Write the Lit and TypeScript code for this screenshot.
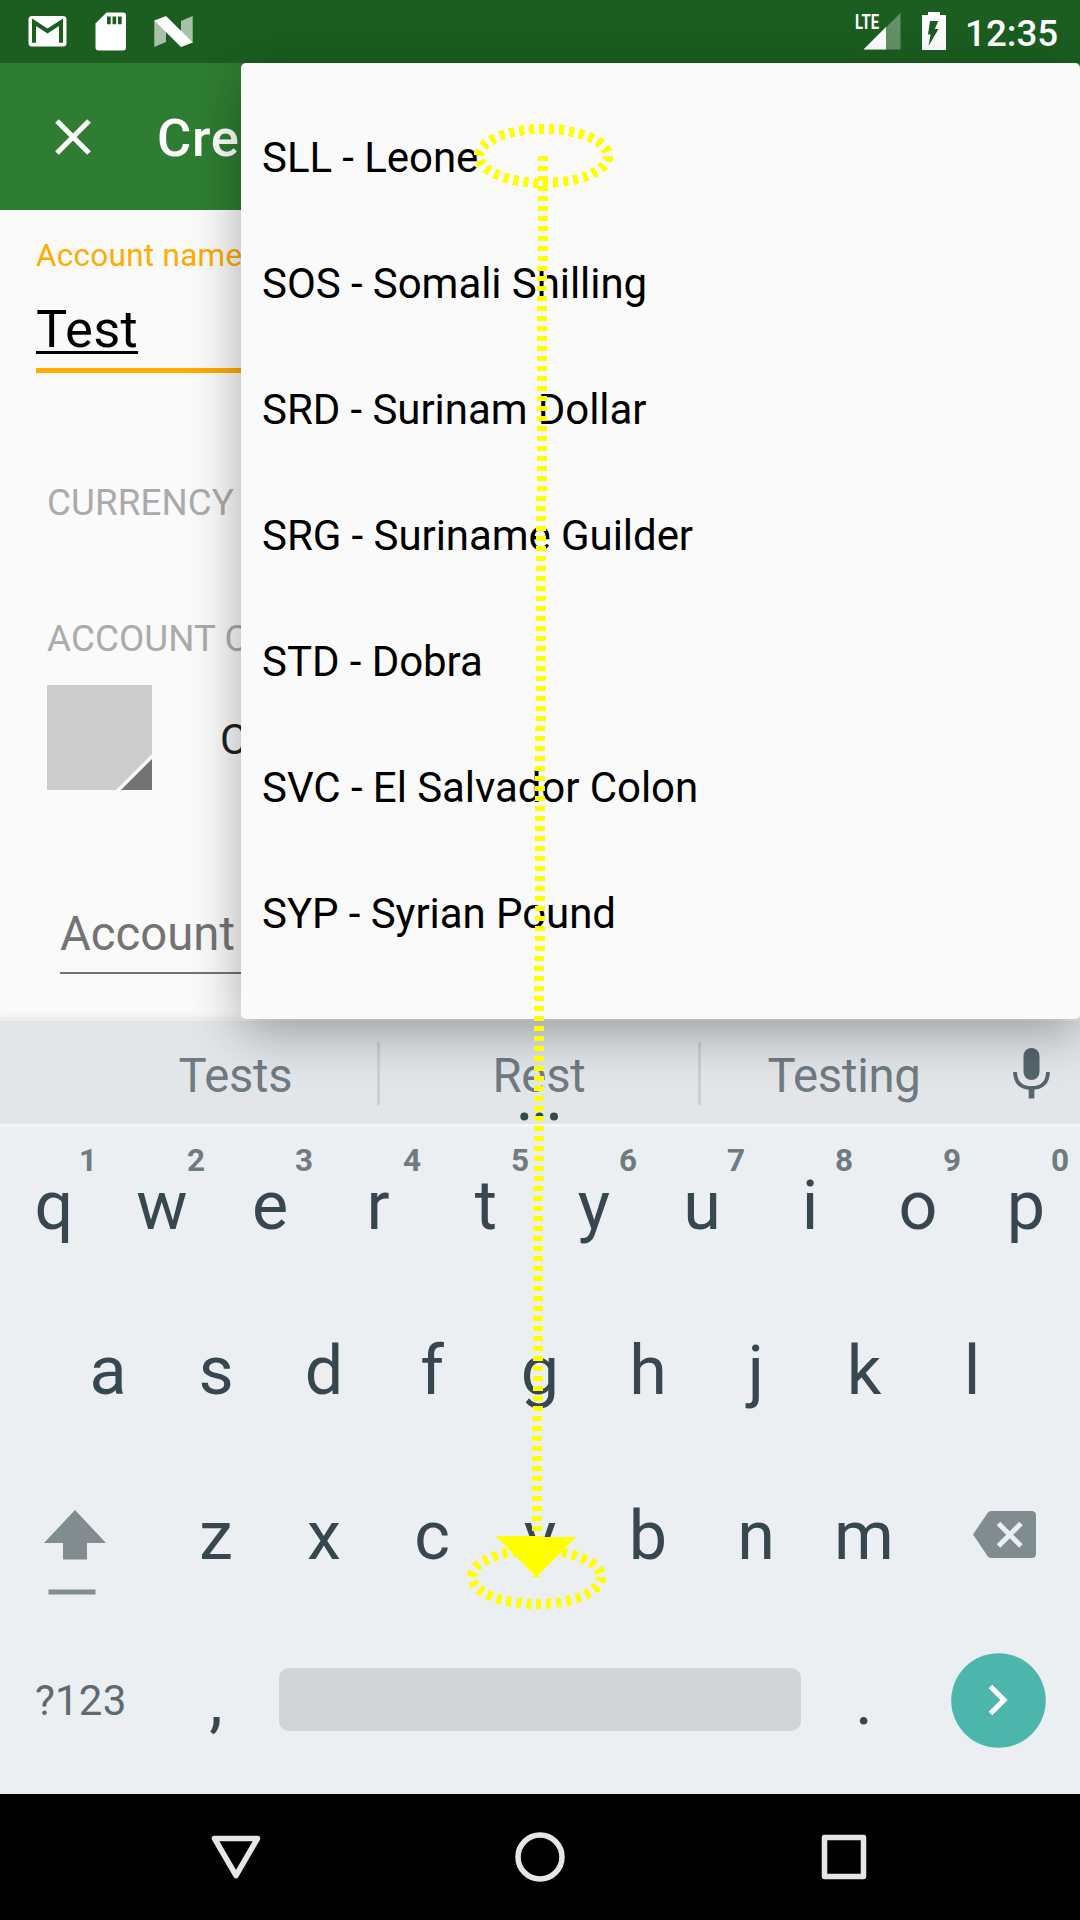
import { LitElement, html, css, svg } from "lit";
import { customElement, property } from "lit/decorators.js";

@customElement("status-bar")
class StatusBar extends LitElement {
  static styles = css`
    :host {
      display: flex;
      justify-content: space-between;
      height: 63px;
      background: #1b5e20;
      color: #fff;
    }
    .icons { display: block; width: 220px; height: 63px; }
    .system { display: flex; }
    .indicators { display: block; width: 110px; height: 63px; }
    .lte { font: 700 20.5px "Roboto", sans-serif; }
    .clock {
      width: 118px;
      font: 500 36.75px/67px "Roboto", sans-serif;
      padding-left: 3px;
      box-sizing: border-box;
    }
  `;
  render() {
    return html`
      <svg class="icons" viewBox="0 0 220 63">
        <rect x="28.5" y="16" width="38" height="30.5" rx="3.5" fill="#fff" />
        <path d="M34 42.7V22.2L47.5 31L61 22.2V42.7" fill="none" stroke="#1b5e20" stroke-width="4" />
        <path d="M106.5 12.5H123Q126 12.5 126 15.5V47.5Q126 50.5 123 50.5H98.500Q95.500 50.500 95.500 47.500V23.500Z" fill="#fff" />
        <path d="M107 16.500h3.700v7.700h-3.700zM112.500 16.500h3.700v7.700h-3.700zM118 16.500h3.700v7.700h-3.700z" fill="#1b5e20" />
        <path d="M154.300 20.500L166 26V42L154.300 47ZM181 21L192.700 16V43L181 38Z" fill="#fff" opacity=".62" />
        <path d="M154.300 20.500L166 16L192.700 42.500L181 47Z" fill="#fff" />
      </svg>
      <div class="system">
        <svg class="indicators" viewBox="852 0 110 63">
          <text class="lte" x="855" y="29" textLength="24" lengthAdjust="spacingAndGlyphs" fill="#fff">LTE</text>
          <path d="M863.500 49.500L900.500 13V49.500Z" fill="#fff" opacity=".32" />
          <path d="M863.500 49.500L886 27V49.500Z" fill="#fff" />
          <path d="M922 15H928V12H940V15H946V50H922Z" fill="#fff" />
          <path d="M930 21H938.300L934.800 29H938.500L928.500 46L930.600 34.500H928Z" fill="#1b5e20" />
        </svg>
        <div class="clock">12:35</div>
      </div>
    `;
  }
}

@customElement("account-form")
class AccountForm extends LitElement {
  static styles = css`
    :host {
      display: flex;
      flex-direction: column;
      height: 956px;
      background: #fafafa;
      font-family: "Roboto", sans-serif;
      white-space: nowrap;
    }
    .toolbar {
      display: flex;
      align-items: center;
      height: 147px;
      background: #2e7d32;
      color: #fff;
    }
    .close { width: 36px; height: 36px; margin-left: 55px; margin-right: 66px; }
    .title { font-size: 52.5px; font-weight: 500; line-height: 60px; padding-top: 3px; letter-spacing: 0.7px; }
    .label {
      height: 90px;
      padding-left: 36px;
      font-size: 31.5px;
      line-height: 92px;
      letter-spacing: 0.27px;
      color: #ffab00;
    }
    .name {
      display: flex;
      height: 68px;
      margin-left: 36px;
      border-bottom: 5px solid #ffab00;
      font-size: 52.5px;
      line-height: 58px;
      letter-spacing: 0.3px;
      color: #000;
    }
    .value {
      text-decoration: underline;
      text-decoration-thickness: 3px;
      text-underline-offset: 4px;
      text-decoration-skip-ink: none;
    }
    .section { padding-left: 47px; font-size: 36.75px; line-height: 50px; letter-spacing: 0.1px; color: #ababab; }
    .currency { margin-top: 105px; }
    .colour { margin-top: 86px; }
    .swatch-row {
      display: flex;
      align-items: center;
      gap: 68px;
      height: 105px;
      margin: 21px 0 0 47px;
      font-size: 42px;
      line-height: 50px;
      color: #212121;
    }
    .swatch { width: 105px; height: 105px; }
    .swatch-label { padding-top: 5px; }
    .desc {
      height: 67px;
      margin: 114.500px 0 0 60px;
      border-bottom: 2.500px solid #737373;
      font-size: 47.25px;
      line-height: 59px;
      color: #737373;
    }
  `;
  render() {
    return html`
      <header class="toolbar">
        <svg class="close" viewBox="0 0 36 36">
          <path d="M2 2L34 34M34 2L2 34" stroke="#fff" stroke-width="5.200" />
        </svg>
        <div class="title">Cre</div>
      </header>
      <div class="label">Account name</div>
      <div class="name"><span class="value">Test</span></div>
      <div class="section currency">CURRENCY</div>
      <div class="section colour">ACCOUNT C</div>
      <div class="swatch-row">
        <svg class="swatch" viewBox="0 0 105 105">
          <rect width="105" height="105" fill="#ccc" />
          <path d="M105 69V105H69Z" fill="#f8f8f8" />
          <path d="M105 74V105H74Z" fill="#737373" />
        </svg>
        <span class="swatch-label">C</span>
      </div>
      <div class="desc">Account</div>
    `;
  }
}

@customElement("currency-menu")
class CurrencyMenu extends LitElement {
  static styles = css`
    :host {
      display: block;
      box-sizing: border-box;
      padding: 32px 21px 0;
      background: #fafafa;
      border-radius: 5px;
      box-shadow: 0 14px 52px rgba(0, 0, 0, 0.32);
    }
    .item {
      font: 42px/126px "Roboto", sans-serif;
      letter-spacing: -0.06px;
      color: #000;
      white-space: nowrap;
    }
  `;
  private items = [
    "SLL - Leone",
    "SOS - Somali Shilling",
    "SRD - Surinam Dollar",
    "SRG - Suriname Guilder",
    "STD - Dobra",
    "SVC - El Salvador Colon",
    "SYP - Syrian Pound",
  ];
  render() {
    return this.items.map((i) => html`<div class="item">${i}</div>`);
  }
}

@customElement("key-cap")
class KeyCap extends LitElement {
  static styles = css`
    :host {
      display: block;
      position: relative;
      width: 108px;
      height: 165px;
      text-align: center;
      font: 68.25px/161.400px "Roboto", sans-serif;
      color: #37474f;
    }
    .hint {
      position: absolute;
      left: 68px;
      top: 15px;
      width: 40px;
      font: 700 31.5px/40px "Roboto", sans-serif;
      color: #6f7b81;
    }
  `;
  @property() label = "";
  @property() hint = "";
  render() {
    return html`${this.hint ? html`<span class="hint">${this.hint}</span>` : null}${this.label}`;
  }
}

@customElement("soft-keyboard")
class SoftKeyboard extends LitElement {
  static styles = css`
    :host {
      display: flex;
      flex-direction: column;
      height: 775px;
      background: #ebeff2;
      font-family: "Roboto", sans-serif;
      box-shadow: 0 -1px 8px rgba(0, 0, 0, 0.1);
    }
    .suggest {
      display: flex;
      align-items: center;
      height: 103px;
      margin-top: 2px;
      padding-left: 94px;
      background: #e2e6e9;
      border-bottom: 3px solid #f4f6f8;
      box-sizing: content-box;
      color: #6f7b81;
      font-size: 47.25px;
      letter-spacing: -0.25px;
      text-align: center;
    }
    .word { line-height: 60px; padding-top: 6px; }
    .left { width: 283px; }
    .mid { width: 318px; }
    .right { width: 286px; }
    .rule { width: 3px; height: 63px; margin-top: 2px; background: #cbd0d3; }
    .mic { width: 37px; height: 52px; margin-left: 26px; }
    .more { position: absolute; left: 520px; top: 1112px; width: 39px; height: 9px; }
    .row { display: flex; height: 165px; }
    .first { margin-top: -1px; }
    .second { padding-left: 54px; }
    .shift { width: 62px; height: 86px; margin: 53.500px 56px 0 44px; }
    .delete { width: 63px; height: 47px; margin: 55px 0 0 55px; }
    .symbols {
      width: 162px;
      padding-left: 35px;
      box-sizing: border-box;
      font-size: 42px;
      line-height: 159px;
      letter-spacing: 0.2px;
      color: #5b6b71;
    }
    .space { width: 522px; height: 63px; margin: 47px 9px 0; border-radius: 10px; background: #d1d5d8; }
    .enter { width: 95px; height: 95px; margin: 32px 0 0 33px; }
  `;
  private keys(letters: string, hints = "") {
    return [...letters].map((l, i) => html`<key-cap .label=${l} .hint=${hints[i] ?? ""}></key-cap>`);
  }
  render() {
    return html`
      <div class="suggest">
        <div class="word left">Tests</div>
        <div class="rule"></div>
        <div class="word mid">Rest</div>
        <div class="rule"></div>
        <div class="word right">Testing</div>
        <svg class="mic" viewBox="0 0 37 52">
          <rect x="10.500" y="1" width="16" height="32" rx="8" fill="#56656b" />
          <path d="M2 25Q2.500 41 18.500 41Q34.500 41 35 25" fill="none" stroke="#56656b" stroke-width="3.800" />
          <rect x="15.700" y="41" width="5.600" height="10.500" fill="#56656b" />
        </svg>
      </div>
      <svg class="more" viewBox="0 0 39 9" fill="#37474f">
        <circle cx="4.300" cy="4.500" r="4" /><circle cx="19.500" cy="4.500" r="4" /><circle cx="34" cy="4.500" r="4" />
      </svg>
      <div class="row first">${this.keys("qwertyuiop", "1234567890")}</div>
      <div class="row second">${this.keys("asdfghjkl")}</div>
      <div class="row">
        <svg class="shift" viewBox="0 0 62 86" fill="#808c90">
          <path d="M31 0L62 33H43V49.500H19V33H0Z" />
          <rect x="4.500" y="79.500" width="47" height="5" />
        </svg>
        ${this.keys("zxcvbnm")}
        <svg class="delete" viewBox="0 0 63 47">
          <path d="M18 0H58.500Q63 0 63 4.500V42.500Q63 47 58.500 47H18Q16 47 14.500 45L0 23.500L14.500 2Q16 0 18 0Z" fill="#808c90" />
          <path d="M25.500 12.500L48 35M48 12.500L25.500 35" stroke="#ebeff2" stroke-width="5" />
        </svg>
      </div>
      <div class="row">
        <div class="symbols">?123</div>
        ${this.keys(",")}
        <div class="space"></div>
        ${this.keys(".")}
        <svg class="enter" viewBox="0 0 95 95">
          <circle cx="47.500" cy="47.500" r="47.300" fill="#4db6ac" />
          <path d="M39.500 33.500L53 47L39.500 60.500" fill="none" stroke="#fff" stroke-width="5.200" />
        </svg>
      </div>
    `;
  }
}

@customElement("nav-bar")
class NavBar extends LitElement {
  static styles = css`
    :host {
      display: flex;
      justify-content: center;
      align-items: center;
      gap: 250px;
      height: 126px;
      background: #000;
    }
    .button { width: 54px; height: 54px; fill: none; stroke: #e6e6e6; stroke-width: 5.5; stroke-linejoin: round; }
  `;
  render() {
    return html`
      <svg class="button" viewBox="0 0 54 54"><path d="M5.500 8.500H48.500L27 45.500Z" /></svg>
      <svg class="button" viewBox="0 0 54 54"><circle cx="27" cy="27" r="22" /></svg>
      <svg class="button" viewBox="0 0 54 54"><rect x="7.500" y="7.500" width="39" height="39" /></svg>
    `;
  }
}

@customElement("swipe-overlay")
class SwipeOverlay extends LitElement {
  static styles = css`
    :host { display: block; pointer-events: none; }
    .canvas { display: block; width: 1080px; height: 1920px; }
    .stroke { fill: none; stroke: #ff0; stroke-width: 10; stroke-dasharray: 5 5; }
    .head { fill: #ff0; }
  `;
  render() {
    return html`
      <svg class="canvas" viewBox="0 0 1080 1920" shape-rendering="crispEdges">
        ${[[543.500, 156], [536.500, 1577]].map(
          ([x, y]) => svg`<ellipse class="stroke" cx=${x} cy=${y} rx="64.500" ry="27" />`
        )}
        <path class="stroke" d="M543 156L537 1537" />
        <path class="head" d="M496 1536L576 1537L537 1576H541V1577H531V1576H535.500Z" />
      </svg>
    `;
  }
}

@customElement("app-root")
class AppRoot extends LitElement {
  static styles = css`
    :host {
      display: block;
      position: relative;
      width: 1080px;
      height: 1920px;
      overflow: hidden;
    }
    .screen { display: flex; flex-direction: column; }
    .menu { position: absolute; left: 241px; top: 63px; width: 839px; height: 956px; }
    .gesture { position: absolute; left: 0; top: 0; }
  `;
  render() {
    return html`
      <div class="screen">
        <status-bar></status-bar>
        <account-form></account-form>
        <soft-keyboard></soft-keyboard>
        <nav-bar></nav-bar>
      </div>
      <currency-menu class="menu"></currency-menu>
      <swipe-overlay class="gesture"></swipe-overlay>
    `;
  }
}
